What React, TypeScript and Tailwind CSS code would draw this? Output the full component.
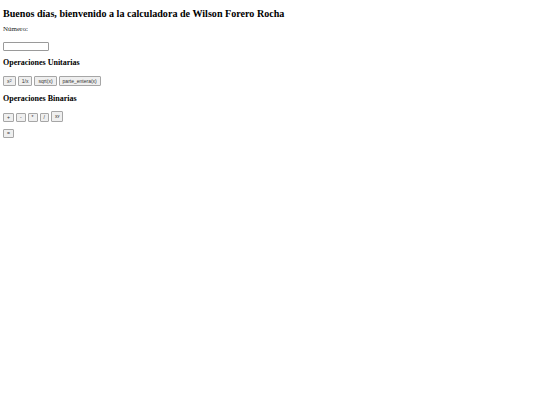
import { useState } from 'react';

const UNARY = ['x2', '1/x', 'sqrt(x)', 'parte_entera(x)'];
const BINARY = ['+', '-', '*', '/', 'xy'];

function Btn({ label, h = 'h-[9px]' }: { label: string; h?: string }) {
  const content =
    label === 'x2' ? (
      <span>
        x<sup className="text-[4px] relative -top-[1px]">2</sup>
      </span>
    ) : label === 'xy' ? (
      <span>
        x<sup className="text-[4px] relative -top-[1px]">y</sup>
      </span>
    ) : (
      label
    );
  return (
    <button
      className={`${h} px-[3px] border border-[#a6a6a6] rounded-[1px] bg-[#efefef] text-[5px] leading-[7px] text-[#333] font-['Liberation_Sans',Arial,sans-serif] flex items-center justify-center`}
    >
      {content}
    </button>
  );
}

export default function App() {
  const [num, setNum] = useState('');
  return (
    <div className="min-h-[405px] bg-white p-[3px] text-black font-['Liberation_Serif','Times_New_Roman',serif]">
      <h1 className="mt-[5px] text-[10.1px] leading-[12px] font-bold">
        Buenos días, bienvenido a la calculadora de Wilson Forero Rocha
      </h1>
      <label className="block mt-[5px] text-[7px] leading-[8px] text-[#222]">Número:</label>
      <input
        value={num}
        onChange={e => setNum(e.target.value)}
        className="block mt-[9px] w-[46px] h-[9px] border border-[#9a9a9a] rounded-[1px] bg-white"
      />
      <h3 className="mt-[7px] text-[8px] leading-[9px] font-bold">Operaciones Unitarias</h3>
      <div className="mt-[9px] flex items-end gap-[2px]">
        {UNARY.map(u => (
          <Btn key={u} label={u} h="h-[10px]" />
        ))}
      </div>
      <h3 className="mt-[8px] text-[8px] leading-[9px] font-bold">Operaciones Binarias</h3>
      <div className="mt-[8px] flex items-end gap-[2px]">
        {BINARY.map(b => (
          <Btn key={b} label={b} h={b === 'xy' ? 'h-[11px]' : 'h-[9px]'} />
        ))}
      </div>
      <div className="mt-[7px] flex">
        <Btn label="=" />
      </div>
    </div>
  );
}
